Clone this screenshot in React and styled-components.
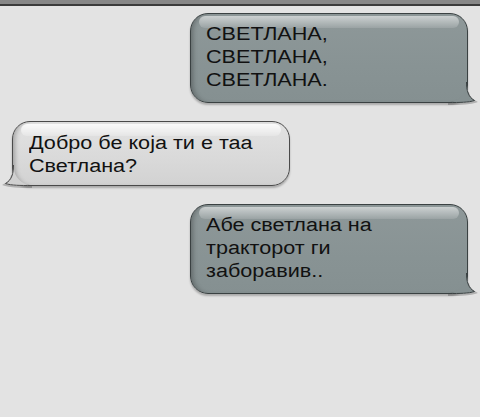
import React from "react";
import styled, { createGlobalStyle } from "styled-components";

const Global = createGlobalStyle`
  html, body { margin: 0; padding: 0; background: #e3e3e3; }
  body { font-family: "Liberation Sans", Arial, sans-serif; }
`;

const Page = styled.div`
  width: 480px;
  height: 417px;
  background: #e3e3e3;
  overflow: hidden;
  display: flex;
  flex-direction: column;
`;

const TopBar = styled.div`
  height: 4px;
  background: #878787;
  border-bottom: 2px solid #3b3b3b;
  flex: none;
`;

const Thread = styled.div`
  display: flex;
  flex-direction: column;
  gap: 18px;
  padding: 7px 12px 0 12px;
`;

const themes = {
  sent: {
    bg: "linear-gradient(#8e9899, #889394 60%, #859091)",
    tail: "#859091",
    border: "#3a4142",
    gloss: "linear-gradient(rgba(255,255,255,0.55), rgba(255,255,255,0.12))",
  },
  received: {
    bg: "linear-gradient(#e2e2e2, #d9d9d9 60%, #d2d2d2)",
    tail: "#d0d0d0",
    border: "#4a4a4a",
    gloss: "linear-gradient(rgba(255,255,255,0.85), rgba(255,255,255,0.2))",
  },
};

const Bubble = styled.div`
  position: relative;
  align-self: ${(p) => (p.$side === "sent" ? "flex-end" : "flex-start")};
  width: 278px;
  box-sizing: border-box;
  padding: ${(p) => p.$pad};
  border: 1px solid ${(p) => themes[p.$side].border};
  border-radius: 18px;
  background: ${(p) => themes[p.$side].bg};
  box-shadow:
    inset 5px 0 5px -3px rgba(0, 0, 0, 0.28),
    0 2px 2px rgba(0, 0, 0, 0.25);
  &::before {
    content: "";
    position: absolute;
    top: 2px;
    left: 8px;
    right: 8px;
    height: 12px;
    border-radius: 10px;
    background: ${(p) => themes[p.$side].gloss};
  }
`;

const Text = styled.div`
  position: relative;
  font-family: "Liberation Sans", Arial, sans-serif;
  font-size: 18px;
  line-height: 23px;
  color: #111;
  white-space: pre;
  transform: scaleX(1.2);
  transform-origin: left top;
`;

const TailSvg = styled.svg`
  position: absolute;
  bottom: -1px;
  width: 28px;
  height: 21px;
  overflow: visible;
  ${(p) =>
    p.$side === "sent"
      ? "right: -9px;"
      : "left: -9px; transform: scaleX(-1);"}
`;

const TAIL_OUTLINE = "M18.5 0 C18.5 8 20 15 26.5 18.5 C20.5 20.5 12 20.5 0 20.5";

function Tail({ side }) {
  const t = themes[side];
  return (
    <TailSvg $side={side} viewBox="0 0 28 21">
      <path
        d="M20 10 C20.5 14 22 16.5 27.5 19.7 C21 22 12 22 0 22"
        fill="none"
        stroke="rgba(0,0,0,0.22)"
        strokeWidth="2"
      />
      <path
        d={TAIL_OUTLINE + " L0.5 20 A17.5 17.5 0 0 0 18 2.5 Z"}
        fill={t.tail}
      />
      <path d={TAIL_OUTLINE} fill="none" stroke={t.border} strokeWidth="1" />
    </TailSvg>
  );
}

const messages = [
  { side: "sent", pad: "9px 15px 10px", text: "СВЕТЛАНА,\nСВЕТЛАНА,\nСВЕТЛАНА." },
  { side: "received", pad: "10px 16px 7px", text: "Добро бе која ти е таа\nСветлана?" },
  { side: "sent", pad: "9px 15px 10px", text: "Абе светлана на\nтракторот ги\nзаборавив.." },
];

export default function App() {
  return (
    <>
      <Global />
      <Page>
        <TopBar />
        <Thread>
          {messages.map((m, i) => (
            <Bubble key={i} $side={m.side} $pad={m.pad}>
              <Tail side={m.side} />
              <Text>{m.text}</Text>
            </Bubble>
          ))}
        </Thread>
      </Page>
    </>
  );
}
